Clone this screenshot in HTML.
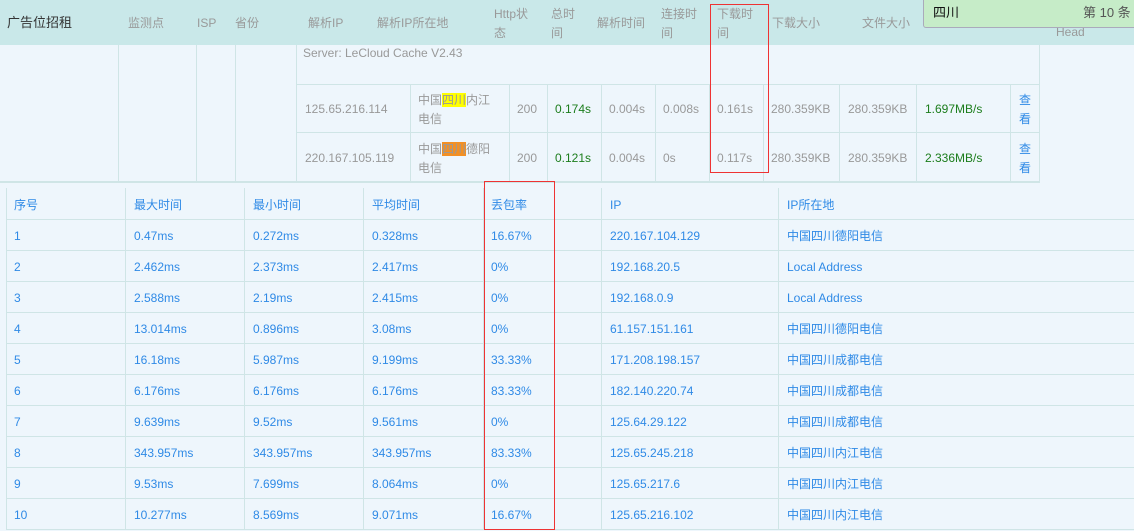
<!DOCTYPE html>
<html><head><meta charset="utf-8"><style>
*{margin:0;padding:0;box-sizing:border-box}
body{width:1134px;height:531px;overflow:hidden;background:#eef6fc;font-family:"Liberation Sans","Noto Sans CJK SC",sans-serif;font-size:12px;color:#999;position:relative}
.a{position:absolute;white-space:nowrap;line-height:16px}
.hd{position:absolute;left:0;top:0;width:1134px;height:45px;background:#c9e8e9}
.vl{position:absolute;width:1px;background:#cfe5e6}
.hl{position:absolute;height:1px;background:#cfe5e6}
.b{color:#2f8ae6}
.g{color:#1c7d1c}
</style></head><body>
<div class="hd"></div>
<div class="a" style="left:7px;top:15px;color:#333;font-size:13px">广告位招租</div>
<div class="a" style="left:128px;top:15px">监测点</div>
<div class="a" style="left:197px;top:15px">ISP</div>
<div class="a" style="left:235px;top:15px">省份</div>
<div class="a" style="left:308px;top:15px">解析IP</div>
<div class="a" style="left:377px;top:15px">解析IP所在地</div>
<div class="a" style="left:494px;top:5px;line-height:19px">Http状<br>态</div>
<div class="a" style="left:551px;top:5px;line-height:19px">总时<br>间</div>
<div class="a" style="left:597px;top:15px">解析时间</div>
<div class="a" style="left:661px;top:5px;line-height:19px">连接时<br>间</div>
<div class="a" style="left:717px;top:5px;line-height:19px">下载时<br>间</div>
<div class="a" style="left:772px;top:15px">下载大小</div>
<div class="a" style="left:862px;top:15px">文件大小</div>
<div class="a" style="left:1056px;top:24px">Head</div>
<div class="a" style="left:923px;top:0;width:215px;height:28px;background:#c6ecc8;border:1px solid #aab;border-top:none;border-radius:0 0 0 3px"></div>
<div class="a" style="left:933px;top:5px;color:#111;font-size:13px">四川</div>
<div class="a" style="left:1083px;top:5px;color:#555;font-size:13px">第 10 条 ,</div>

<div class="vl" style="left:118px;top:45px;height:137px"></div>
<div class="vl" style="left:196px;top:45px;height:137px"></div>
<div class="vl" style="left:235px;top:45px;height:137px"></div>
<div class="vl" style="left:296px;top:45px;height:137px"></div>
<div class="vl" style="left:1039px;top:45px;height:137px"></div>
<div class="hl" style="left:296px;top:84px;width:744px"></div>
<div class="hl" style="left:296px;top:132px;width:744px"></div>
<div class="hl" style="left:0;top:181px;width:1040px;height:2px"></div>
<div class="vl" style="left:410px;top:84px;height:98px"></div>
<div class="vl" style="left:509px;top:84px;height:98px"></div>
<div class="vl" style="left:547px;top:84px;height:98px"></div>
<div class="vl" style="left:601px;top:84px;height:98px"></div>
<div class="vl" style="left:655px;top:84px;height:98px"></div>
<div class="vl" style="left:709px;top:84px;height:98px"></div>
<div class="vl" style="left:763px;top:84px;height:98px"></div>
<div class="vl" style="left:839px;top:84px;height:98px"></div>
<div class="vl" style="left:916px;top:84px;height:98px"></div>
<div class="vl" style="left:1010px;top:84px;height:98px"></div>
<div class="a" style="left:303px;top:45px">Server: LeCloud Cache V2.43</div>

<div class="a" style="left:305px;top:101px">125.65.216.114</div>
<div class="a" style="left:418px;top:91px;line-height:19px">中国<span style="background:#ff0;color:#999">四川</span>内江<br>电信</div>
<div class="a" style="left:517px;top:101px">200</div>
<div class="a g" style="left:555px;top:101px">0.174s</div>
<div class="a" style="left:609px;top:101px">0.004s</div>
<div class="a" style="left:663px;top:101px">0.008s</div>
<div class="a" style="left:717px;top:101px">0.161s</div>
<div class="a" style="left:771px;top:101px">280.359KB</div>
<div class="a" style="left:848px;top:101px">280.359KB</div>
<div class="a g" style="left:925px;top:101px">1.697MB/s</div>
<div class="a b" style="left:1019px;top:91px;line-height:19px">查<br>看</div>

<div class="a" style="left:305px;top:150px">220.167.105.119</div>
<div class="a" style="left:418px;top:140px;line-height:19px">中国<span style="background:#f39024;color:#999">四川</span>德阳<br>电信</div>
<div class="a" style="left:517px;top:150px">200</div>
<div class="a g" style="left:555px;top:150px">0.121s</div>
<div class="a" style="left:609px;top:150px">0.004s</div>
<div class="a" style="left:663px;top:150px">0s</div>
<div class="a" style="left:717px;top:150px">0.117s</div>
<div class="a" style="left:771px;top:150px">280.359KB</div>
<div class="a" style="left:848px;top:150px">280.359KB</div>
<div class="a g" style="left:925px;top:150px">2.336MB/s</div>
<div class="a b" style="left:1019px;top:140px;line-height:19px">查<br>看</div>

<div class="vl" style="left:6px;top:188px;height:342px"></div>
<div class="vl" style="left:125px;top:188px;height:342px"></div>
<div class="vl" style="left:244px;top:188px;height:342px"></div>
<div class="vl" style="left:363px;top:188px;height:342px"></div>
<div class="vl" style="left:483px;top:188px;height:342px"></div>
<div class="vl" style="left:601px;top:188px;height:342px"></div>
<div class="vl" style="left:778px;top:188px;height:342px"></div>
<div class="hl" style="left:6px;top:219px;width:1128px"></div>
<div class="hl" style="left:6px;top:250px;width:1128px"></div>
<div class="hl" style="left:6px;top:281px;width:1128px"></div>
<div class="hl" style="left:6px;top:312px;width:1128px"></div>
<div class="hl" style="left:6px;top:343px;width:1128px"></div>
<div class="hl" style="left:6px;top:374px;width:1128px"></div>
<div class="hl" style="left:6px;top:405px;width:1128px"></div>
<div class="hl" style="left:6px;top:436px;width:1128px"></div>
<div class="hl" style="left:6px;top:467px;width:1128px"></div>
<div class="hl" style="left:6px;top:498px;width:1128px"></div>
<div class="hl" style="left:6px;top:529px;width:1128px"></div>

<div class="b">
<div class="a" style="left:14px;top:197px">序号</div><div class="a" style="left:134px;top:197px">最大时间</div><div class="a" style="left:253px;top:197px">最小时间</div><div class="a" style="left:372px;top:197px">平均时间</div><div class="a" style="left:491px;top:197px">丢包率</div><div class="a" style="left:610px;top:197px">IP</div><div class="a" style="left:787px;top:197px">IP所在地</div>

<div class="a" style="left:14px;top:228px">1</div><div class="a" style="left:134px;top:228px">0.47ms</div><div class="a" style="left:253px;top:228px">0.272ms</div><div class="a" style="left:372px;top:228px">0.328ms</div><div class="a" style="left:491px;top:228px">16.67%</div><div class="a" style="left:610px;top:228px">220.167.104.129</div><div class="a" style="left:787px;top:228px">中国四川德阳电信</div>
<div class="a" style="left:14px;top:259px">2</div><div class="a" style="left:134px;top:259px">2.462ms</div><div class="a" style="left:253px;top:259px">2.373ms</div><div class="a" style="left:372px;top:259px">2.417ms</div><div class="a" style="left:491px;top:259px">0%</div><div class="a" style="left:610px;top:259px">192.168.20.5</div><div class="a" style="left:787px;top:259px">Local Address</div>
<div class="a" style="left:14px;top:290px">3</div><div class="a" style="left:134px;top:290px">2.588ms</div><div class="a" style="left:253px;top:290px">2.19ms</div><div class="a" style="left:372px;top:290px">2.415ms</div><div class="a" style="left:491px;top:290px">0%</div><div class="a" style="left:610px;top:290px">192.168.0.9</div><div class="a" style="left:787px;top:290px">Local Address</div>
<div class="a" style="left:14px;top:321px">4</div><div class="a" style="left:134px;top:321px">13.014ms</div><div class="a" style="left:253px;top:321px">0.896ms</div><div class="a" style="left:372px;top:321px">3.08ms</div><div class="a" style="left:491px;top:321px">0%</div><div class="a" style="left:610px;top:321px">61.157.151.161</div><div class="a" style="left:787px;top:321px">中国四川德阳电信</div>
<div class="a" style="left:14px;top:352px">5</div><div class="a" style="left:134px;top:352px">16.18ms</div><div class="a" style="left:253px;top:352px">5.987ms</div><div class="a" style="left:372px;top:352px">9.199ms</div><div class="a" style="left:491px;top:352px">33.33%</div><div class="a" style="left:610px;top:352px">171.208.198.157</div><div class="a" style="left:787px;top:352px">中国四川成都电信</div>
<div class="a" style="left:14px;top:383px">6</div><div class="a" style="left:134px;top:383px">6.176ms</div><div class="a" style="left:253px;top:383px">6.176ms</div><div class="a" style="left:372px;top:383px">6.176ms</div><div class="a" style="left:491px;top:383px">83.33%</div><div class="a" style="left:610px;top:383px">182.140.220.74</div><div class="a" style="left:787px;top:383px">中国四川成都电信</div>
<div class="a" style="left:14px;top:414px">7</div><div class="a" style="left:134px;top:414px">9.639ms</div><div class="a" style="left:253px;top:414px">9.52ms</div><div class="a" style="left:372px;top:414px">9.561ms</div><div class="a" style="left:491px;top:414px">0%</div><div class="a" style="left:610px;top:414px">125.64.29.122</div><div class="a" style="left:787px;top:414px">中国四川成都电信</div>
<div class="a" style="left:14px;top:445px">8</div><div class="a" style="left:134px;top:445px">343.957ms</div><div class="a" style="left:253px;top:445px">343.957ms</div><div class="a" style="left:372px;top:445px">343.957ms</div><div class="a" style="left:491px;top:445px">83.33%</div><div class="a" style="left:610px;top:445px">125.65.245.218</div><div class="a" style="left:787px;top:445px">中国四川内江电信</div>
<div class="a" style="left:14px;top:476px">9</div><div class="a" style="left:134px;top:476px">9.53ms</div><div class="a" style="left:253px;top:476px">7.699ms</div><div class="a" style="left:372px;top:476px">8.064ms</div><div class="a" style="left:491px;top:476px">0%</div><div class="a" style="left:610px;top:476px">125.65.217.6</div><div class="a" style="left:787px;top:476px">中国四川内江电信</div>
<div class="a" style="left:14px;top:507px">10</div><div class="a" style="left:134px;top:507px">10.277ms</div><div class="a" style="left:253px;top:507px">8.569ms</div><div class="a" style="left:372px;top:507px">9.071ms</div><div class="a" style="left:491px;top:507px">16.67%</div><div class="a" style="left:610px;top:507px">125.65.216.102</div><div class="a" style="left:787px;top:507px">中国四川内江电信</div>
</div>

<div class="a" style="left:710px;top:4px;width:59px;height:169px;border:1px solid #e33"></div>
<div class="a" style="left:484px;top:181px;width:71px;height:349px;border:1px solid #e33"></div>
</body></html>
